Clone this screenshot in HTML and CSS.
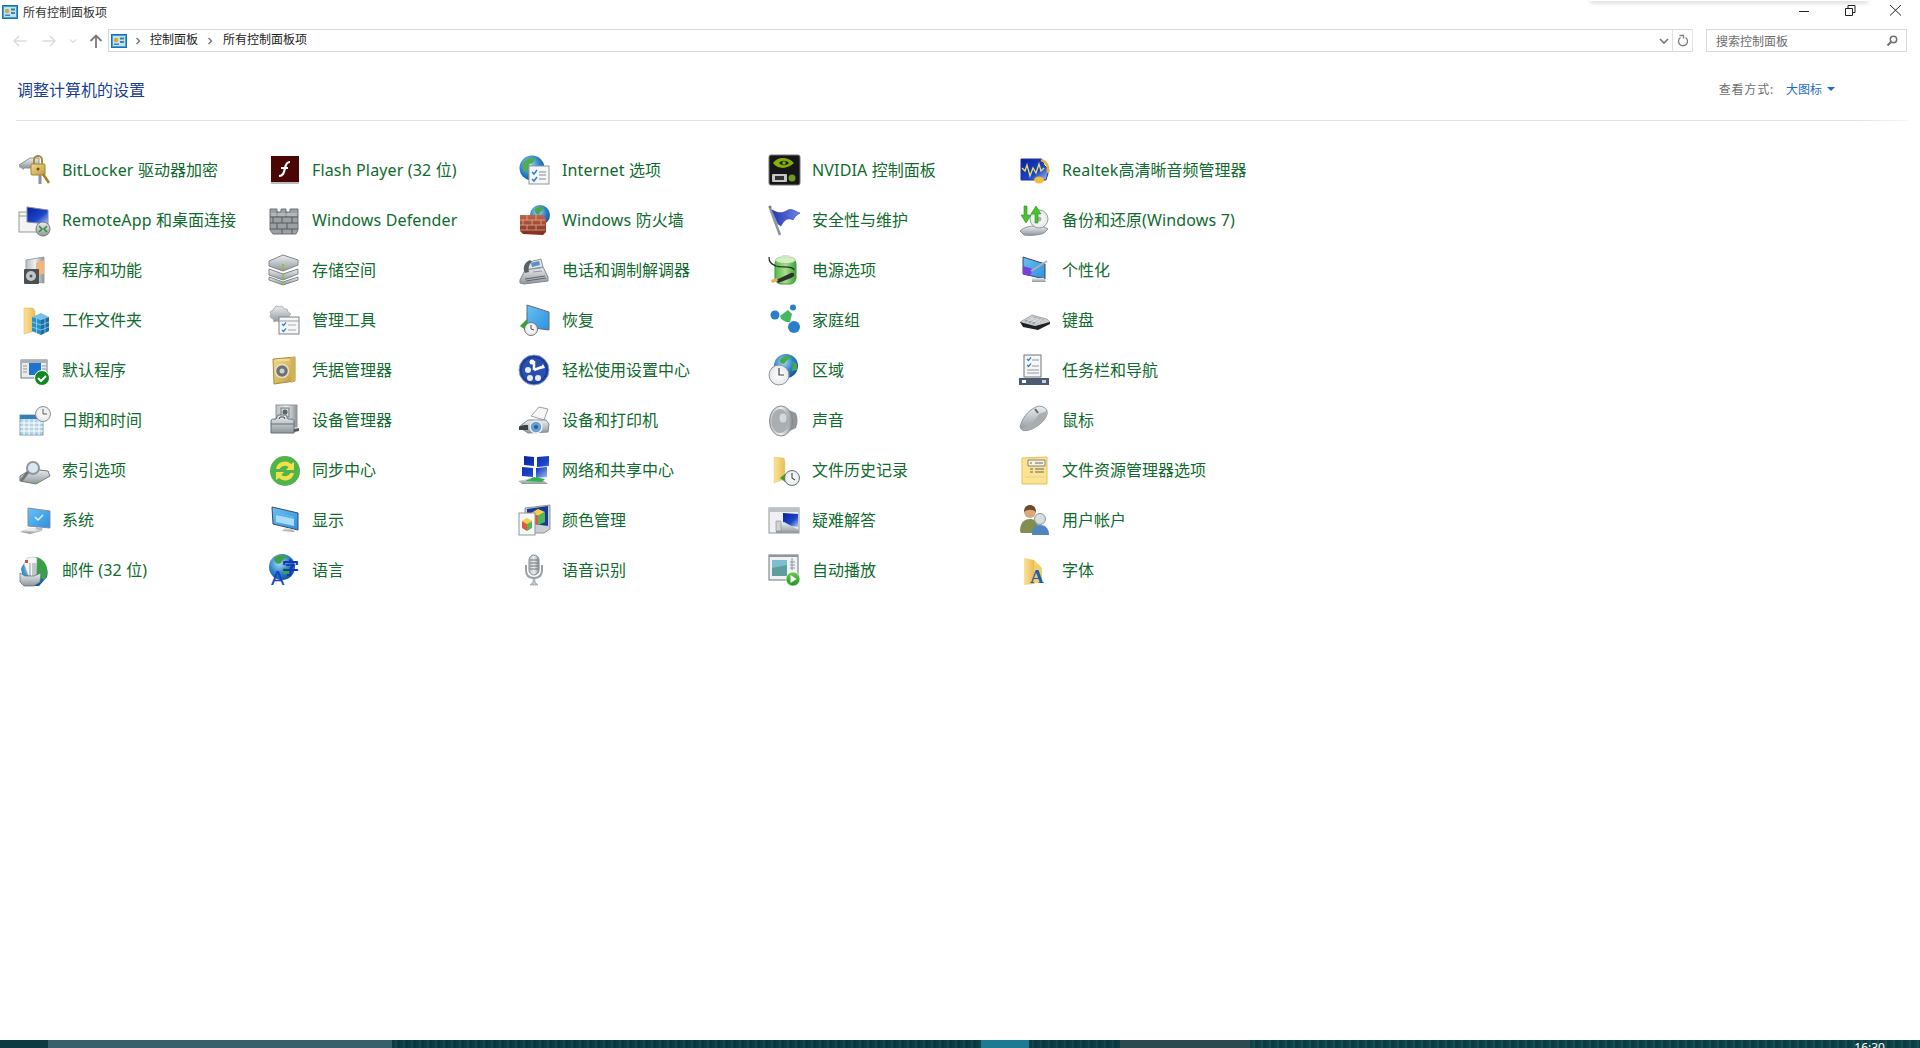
FILE: index.html
```html
<!DOCTYPE html>
<html lang="zh-CN">
<head>
<meta charset="utf-8">
<title>所有控制面板项</title>
<link rel="stylesheet" href="styles.css">
</head>
<body>
<svg class="defs" width="0" height="0" aria-hidden="true">
<defs>
<linearGradient id="steel" x1="0" y1="0" x2="0" y2="1"><stop offset="0" stop-color="#eceff1"/><stop offset="1" stop-color="#8f979c"/></linearGradient>
<linearGradient id="steelH" x1="0" y1="0" x2="1" y2="0"><stop offset="0" stop-color="#b9bfc3"/><stop offset=".5" stop-color="#eef0f1"/><stop offset="1" stop-color="#8a9297"/></linearGradient>
<linearGradient id="gold" x1="0" y1="0" x2="1" y2="1"><stop offset="0" stop-color="#f3dc8e"/><stop offset="1" stop-color="#c09a3e"/></linearGradient>
<linearGradient id="folder" x1="0" y1="0" x2="1" y2="0"><stop offset="0" stop-color="#fbe39a"/><stop offset="1" stop-color="#e8bd55"/></linearGradient>
<linearGradient id="screen" x1="0" y1="0" x2="1" y2="1"><stop offset="0" stop-color="#65c3f5"/><stop offset="1" stop-color="#2f8fdc"/></linearGradient>
<linearGradient id="navy" x1="0" y1="0" x2="1" y2="1"><stop offset="0" stop-color="#0a1f9a"/><stop offset=".6" stop-color="#1b46c9"/><stop offset="1" stop-color="#b9c8ef"/></linearGradient>
<linearGradient id="flag" x1="0" y1="0" x2="1" y2="0"><stop offset="0" stop-color="#2236b4"/><stop offset="1" stop-color="#6f86e6"/></linearGradient>
<linearGradient id="green" x1="0" y1="0" x2="0" y2="1"><stop offset="0" stop-color="#6cc94f"/><stop offset="1" stop-color="#1f9424"/></linearGradient>
<linearGradient id="battery" x1="0" y1="0" x2="1" y2="0"><stop offset="0" stop-color="#54b948"/><stop offset=".5" stop-color="#a6e08a"/><stop offset="1" stop-color="#3aa13a"/></linearGradient>
<radialGradient id="globe" cx=".4" cy=".35" r=".7"><stop offset="0" stop-color="#a9dcf4"/><stop offset=".55" stop-color="#2d86c8"/><stop offset="1" stop-color="#124f97"/></radialGradient>
<radialGradient id="clock" cx=".5" cy=".5" r=".6"><stop offset="0" stop-color="#fff"/><stop offset=".75" stop-color="#e8eaeb"/><stop offset="1" stop-color="#8f979c"/></radialGradient>
<linearGradient id="brick" x1="0" y1="0" x2="0" y2="1"><stop offset="0" stop-color="#c2664a"/><stop offset="1" stop-color="#7c2d20"/></linearGradient>
</defs>
</svg>

<div class="popup-edge"></div>

<header class="titlebar">
  <svg class="cp-icon" viewBox="0 0 16 14"><rect x=".5" y=".5" width="15" height="13" fill="#3f9fdb" stroke="#1e6fae"/><rect x="2" y="2" width="12" height="10" fill="#bfe2f5"/><circle cx="5" cy="6" r="2.2" fill="#d9a63a"/><rect x="9" y="3.5" width="4" height="2" fill="#3b8f52"/><rect x="9" y="7" width="4" height="2" fill="#4e7fb5"/><rect x="3" y="9.5" width="5" height="1.5" fill="#4e7fb5"/></svg>
  <span class="title-text">所有控制面板项</span>
  <div class="window-controls">
    <svg class="win-btn" viewBox="0 0 45 20"><path d="M16 11.500h10" stroke="#222" fill="none"/></svg>
    <svg class="win-btn" viewBox="0 0 45 20"><path d="M17.500 8.500h7v7h-7zM20 8.500v-3h7v7h-2.500" stroke="#222" fill="none"/></svg>
    <svg class="win-btn" viewBox="0 0 45 20"><path d="M17 5l11 10.500M28 5l-11 10.500" stroke="#222" fill="none"/></svg>
  </div>
</header>

<nav class="navbar">
  <div class="nav-buttons">
    <svg class="nav-ico" viewBox="0 0 16 16"><path d="M14.500 8H2M7 3L2 8l5 5" stroke="#dcdcdc" stroke-width="1.500" fill="none"/></svg>
    <svg class="nav-ico" viewBox="0 0 16 16"><path d="M1.500 8H14M9 3l5 5-5 5" stroke="#dcdcdc" stroke-width="1.500" fill="none"/></svg>
    <svg class="nav-small" viewBox="0 0 8 8"><path d="M1 2.500l3 3 3-3" stroke="#dcdcdc" stroke-width="1.200" fill="none"/></svg>
    <svg class="nav-ico" viewBox="0 0 16 16"><path d="M8 15V2.500M2.500 8L8 2.500 13.500 8" stroke="#7a7a7a" stroke-width="1.800" fill="none"/></svg>
  </div>
  <div class="address">
    <svg class="cp-icon" viewBox="0 0 16 14"><rect x=".5" y=".5" width="15" height="13" fill="#3f9fdb" stroke="#1e6fae"/><rect x="2" y="2" width="12" height="10" fill="#bfe2f5"/><circle cx="5" cy="6" r="2.2" fill="#d9a63a"/><rect x="9" y="3.5" width="4" height="2" fill="#3b8f52"/><rect x="9" y="7" width="4" height="2" fill="#4e7fb5"/><rect x="3" y="9.5" width="5" height="1.5" fill="#4e7fb5"/></svg>
    <svg class="crumb-sep" viewBox="0 0 6 8"><path d="M1.500 1l3 3-3 3" stroke="#777" stroke-width="1.400" fill="none"/></svg>
    <span class="crumb">控制面板</span>
    <svg class="crumb-sep" viewBox="0 0 6 8"><path d="M1.500 1l3 3-3 3" stroke="#777" stroke-width="1.400" fill="none"/></svg>
    <span class="crumb crumb-last">所有控制面板项</span>
    <svg class="addr-chevron" viewBox="0 0 10 8"><path d="M1 2l4 4 4-4" stroke="#777" stroke-width="1.600" fill="none"/></svg>
    <div class="refresh"><svg class="refresh-ico" viewBox="0 0 12 14"><path d="M3.500 3.500a4.500 4.500 0 1 0 5 0M2.500 1.500h4v3" stroke="#7f7f7f" stroke-width="1.300" fill="none"/></svg></div>
  </div>
  <div class="search">
    <span class="search-text">搜索控制面板</span>
    <svg class="search-ico" viewBox="0 0 12 12"><circle cx="7.500" cy="4.500" r="3.200" stroke="#6f6f6f" stroke-width="1.500" fill="none"/><path d="M5 7l-3.500 3.500" stroke="#6f6f6f" stroke-width="2" fill="none"/></svg>
  </div>
</nav>

<main class="main">
  <div class="heading-row">
    <h1 class="heading">调整计算机的设置</h1>
    <div class="view-by">
      <span class="view-label">查看方式:</span>
      <span class="view-value">大图标</span>
      <span class="view-caret"></span>
    </div>
  </div>

  <div class="items">
    <!-- row 1 -->
    <a class="item"><svg class="ico" viewBox="0 0 32 32"><path d="M1 11L12 4h9v10H6z" fill="url(#steel)" stroke="#8b9198"/><path d="M1 11l5 3v2l-5-3z" fill="#9aa1a6"/><path d="M16 11V6a4 4 0 0 1 8 0v5" fill="none" stroke="#a98a3c" stroke-width="2"/><rect x="13" y="10" width="14" height="11" rx="1" fill="url(#gold)" stroke="#a5822f"/><circle cx="20" cy="15" r="1.500" fill="#6b5216"/><path d="M22 21v9" stroke="#8b9198" stroke-width="3"/><path d="M25 20l6 9" stroke="#b27b22" stroke-width="2.500"/></svg><span class="label"><span class="latin">BitLocker </span>驱动器加密</span></a>
    <a class="item"><svg class="ico" viewBox="0 0 32 32"><rect x="3" y="2" width="28" height="26" fill="#4a0505"/><path d="M3 28h28v2H3z" fill="#bbb"/><path d="M11 22c4 0 5-3 6-8s3-6 5-6M13 14h7" stroke="#fff" stroke-width="2.200" fill="none"/></svg><span class="label"><span class="latin">Flash Player (32 </span>位<span class="latin">)</span></span></a>
    <a class="item"><svg class="ico" viewBox="0 0 32 32"><circle cx="14" cy="14" r="12.500" fill="url(#globe)"/><path d="M5 9c3-4 8-6 11-5 2 3-2 6-5 6 1 4-2 7-3 9-2-2-4-6-3-10z" fill="#4fae4b"/><path d="M18 12l7 0 0 9-5 3z" fill="#3f9a45"/><rect x="11" y="12" width="20" height="18" fill="#f4f6f7" stroke="#8f979c"/><path d="M14 18l2 2 3-4M14 25l2 2 3-4" stroke="#2b7fd0" stroke-width="1.500" fill="none"/><path d="M21 18h7M21 21h7M21 25h7" stroke="#888" fill="none"/></svg><span class="label"><span class="latin">Internet </span>选项</span></a>
    <a class="item"><svg class="ico" viewBox="0 0 32 32"><rect x="1" y="1" width="31" height="30" rx="2" fill="#161616" stroke="#777"/><path d="M5 9c5-7 15-6 21 0-6 6-16 7-21 0z" fill="#84b000"/><path d="M11 9c3-3 7-3 10 0-3 3-7 3-10 0z" fill="#161616"/><circle cx="16" cy="9" r="1.800" fill="#84b000"/><rect x="4" y="20" width="15" height="8" rx="1" fill="#c6c6c6"/><rect x="7" y="22" width="9" height="4" fill="#333"/><circle cx="24" cy="24" r="3.500" fill="#6f9c1f"/></svg><span class="label"><span class="latin">NVIDIA </span>控制面板</span></a>
    <a class="item"><svg class="ico" viewBox="0 0 32 32"><path d="M3 5h21l2 6 5 5-3 10H3z" fill="url(#navy)" stroke="#23329a"/><path d="M4 14l3 3 2-6 3 11 3-8 3 5 3-9 2 7 3-3" stroke="#f2e15c" stroke-width="1.300" fill="none"/><path d="M23 6c5 1 8 6 7 13" stroke="#e8b338" stroke-width="2.500" fill="none"/><ellipse cx="21" cy="26" rx="5" ry="3.500" fill="#f1be3d"/></svg><span class="label"><span class="latin">Realtek</span>高清晰音频管理器</span></a>

    <!-- row 2 -->
    <a class="item"><svg class="ico" viewBox="0 0 32 32"><rect x="1" y="8" width="22" height="20" fill="#f2f3f4" stroke="#999"/><path d="M1 12h10" stroke="#999"/><path d="M9 3l21 3v14L9 18z" fill="url(#navy)" stroke="#7f8ca8"/><circle cx="25" cy="25" r="7" fill="url(#steel)" stroke="#777"/><path d="M21 22l3 3-3 3M29 22l-3 3 3 3" stroke="#2d8e33" stroke-width="1.500" fill="none"/></svg><span class="label"><span class="latin">RemoteApp </span>和桌面连接</span></a>
    <a class="item"><svg class="ico" viewBox="0 0 32 32"><path d="M2 5h7v3h4V5h5v3h4V5h8v21l-2 4H5l-3-4z" fill="#9aa0a3" stroke="#6d7376"/><path d="M2 13h28M2 19h28M2 25h28M9 8v5M18 8v5M5 13v6M14 13v6M24 13v6M9 19v6M19 19v6M14 25v5M24 25v5" stroke="#555a5d" fill="none"/><path d="M3 9h26v3H3z" fill="#c9cdd0" opacity=".5"/></svg><span class="label"><span class="latin">Windows Defender</span></span></a>
    <a class="item"><svg class="ico" viewBox="0 0 32 32"><circle cx="22" cy="11" r="10" fill="url(#globe)"/><path d="M17 5c3-3 7-3 9-2-1 3-4 4-5 8-2 0-5-3-4-6z" fill="#48a948"/><path d="M2 11l23 0 3 3v14l-3 3-20-1-3-3z" fill="url(#brick)"/><path d="M2 16h25M2 21h25M2 26h25M9 11v5M18 11v5M5 16v5M14 16v5M23 16v5M9 21v5M18 21v5" stroke="#e8b7a2" stroke-width=".7" fill="none"/></svg><span class="label"><span class="latin">Windows </span>防火墙</span></a>
    <a class="item"><svg class="ico" viewBox="0 0 32 32"><path d="M2 4l10 27" stroke="#8f979c" stroke-width="2.500"/><circle cx="2" cy="3" r="1.500" fill="#777"/><path d="M4 6c6 3 10 4 16 0 4-2 8 2 12 3-4 2-6 5-7 7-5-3-9 0-12 6l-3-2z" fill="url(#flag)" stroke="#27369a" stroke-width=".6"/></svg><span class="label">安全性与维护</span></a>
    <a class="item"><svg class="ico" viewBox="0 0 32 32"><path d="M2 27c4-4 10-5 16-5l6 0 6 3-4 4c-4 2-14 3-20 2z" fill="url(#steel)" stroke="#8a9297"/><circle cx="21" cy="15" r="9" fill="url(#clock)" stroke="#9aa1a6"/><circle cx="21" cy="15" r="2.500" fill="#aab0b4"/><path d="M9 2v9h4l-5 8-5-8h3V2z" fill="#46c42e" stroke="#2e8c1f" stroke-width=".6"/><path d="M17 19v-9h-4l5-8 5 8h-3v9z" fill="#46c42e" stroke="#2e8c1f" stroke-width=".6"/></svg><span class="label">备份和还原<span class="latin">(Windows 7)</span></span></a>

    <!-- row 3 -->
    <a class="item"><svg class="ico" viewBox="0 0 32 32"><path d="M8 6l18-3v26l-18-2z" fill="url(#steelH)" stroke="#9aa1a6"/><path d="M18 9l8-3v14l-8 1z" fill="#f0b778"/><rect x="6" y="15" width="15" height="15" fill="#4b4f52" rx="1"/><circle cx="13" cy="22" r="5" fill="#c2c6c9"/><circle cx="13" cy="22" r="1.500" fill="#555"/></svg><span class="label">程序和功能</span></a>
    <a class="item"><svg class="ico" viewBox="0 0 32 32"><path d="M1 7l14-6 15 5v5l-15 6-14-5z" fill="url(#steel)" stroke="#7f878c"/><path d="M1 15l14 5 15-5v5l-15 6-14-5z" fill="url(#steel)" stroke="#7f878c"/><path d="M1 23l14 5 15-5v3l-15 5-14-5z" fill="url(#steel)" stroke="#7f878c"/><path d="M15 10v6M15 19v6M15 28v3" stroke="#8cbf3c" stroke-width="1.500"/></svg><span class="label">存储空间</span></a>
    <a class="item"><svg class="ico" viewBox="0 0 32 32"><path d="M2 26L7 16l18-3 5 10v4L6 30l-4-1z" fill="url(#steel)" stroke="#7f878c"/><path d="M6 16L11 8l12-3 2 8z" fill="#dfe3e6" stroke="#8f979c"/><path d="M13 9l8-2 1 4-8 2z" fill="#5d90c8"/><path d="M7 19C4 13 7 8 12 6l2 2c-3 2-4 6-3 10z" fill="#596066"/><path d="M7 25l20-3M8 27l20-3" stroke="#5e666b" fill="none"/><path d="M15 15l8-1M15 18l9-1" stroke="#8f979c" fill="none"/></svg><span class="label">电话和调制解调器</span></a>
    <a class="item"><svg class="ico" viewBox="0 0 32 32"><rect x="7" y="4" width="21" height="26" rx="6" fill="url(#battery)" stroke="#3f9a3f"/><ellipse cx="17.500" cy="6" rx="10" ry="3.500" fill="#d3efc2" stroke="#7cb96a" stroke-width=".5"/><rect x="14" y="1" width="7" height="3" rx="1" fill="#cfe6c3"/><path d="M1 3c0 6 3 7 7 9 5 2 17-1 18 4" stroke="#2d2d2d" stroke-width="1.300" fill="none"/><path d="M8 26l15-7c2-1 4 1 3 3-1 1-2 1-3 2L10 29z" fill="#2f2f2f"/><path d="M3 26l6-2 1 3-6 2z" fill="#e6b04c"/></svg><span class="label">电源选项</span></a>
    <a class="item"><svg class="ico" viewBox="0 0 32 32"><path d="M5 3l22 7v15l-22-5z" fill="url(#screen)" stroke="#445"/><path d="M5 12l10 3-3 7-7-2z" fill="#7a3fe0"/><path d="M13 17l16-10" stroke="#a9b2b8" stroke-width="2"/><path d="M14 24h12l2 4H14z" fill="url(#steel)"/></svg><span class="label">个性化</span></a>

    <!-- row 4 -->
    <a class="item"><svg class="ico" viewBox="0 0 32 32"><path d="M6 4h9l2 3v20l-11 3z" fill="url(#folder)" stroke="#d9b45a" stroke-width=".5"/><path d="M14 13l9-4 8 4-8 3z" fill="#74c2e8"/><path d="M14 13l9 3v15l-9-4z" fill="#2a8fc7"/><path d="M23 16l8-3v14l-8 4z" fill="#1a6da7"/><path d="M14 18l9 3 8-3M14 23l9 3 8-3M18.500 14.500v14.500M27 15v14" stroke="#a8dcf3" stroke-width=".7" fill="none"/></svg><span class="label">工作文件夹</span></a>
    <a class="item"><svg class="ico" viewBox="0 0 32 32"><path d="M8 2l4 1 2-1 2 3 3 0 1 3 3 2-2 2 0 3H14l-3 3-2-1-3 1-1-3-3-2 1-3-1-2 3-2z" fill="url(#steel)" stroke="#aeb4b7"/><rect x="11" y="13" width="20" height="17" fill="#f4f6f7" stroke="#7c8488"/><path d="M11 17h20" stroke="#9aa1a6"/><path d="M14 20l1.500 1.500 2.500-3M14 26l1.500 1.500 2.500-3" stroke="#3d80c0" stroke-width="1.200" fill="none"/><path d="M20 21h8M20 26h8" stroke="#aaa"/></svg><span class="label">管理工具</span></a>
    <a class="item"><svg class="ico" viewBox="0 0 32 32"><path d="M9 1l22 7v18l-22-3z" fill="url(#screen)" stroke="#667"/><path d="M2 22l7-7v4c4 0 6 2 6 4H9v4z" fill="#35a42f"/><circle cx="13" cy="25" r="6.500" fill="url(#clock)" stroke="#777"/><path d="M13 21v4l3 1" stroke="#444" fill="none"/></svg><span class="label">恢复</span></a>
    <a class="item"><svg class="ico" viewBox="0 0 32 32"><circle cx="7" cy="11" r="4.500" fill="#2a80c8"/><circle cx="25" cy="3.500" r="3" fill="#2a80c8"/><circle cx="26" cy="23" r="6" fill="#2a80c8"/><path d="M12 12l8-6 4 4-2 8-4 0-5-3z" fill="#42b865"/></svg><span class="label">家庭组</span></a>
    <a class="item"><svg class="ico" viewBox="0 0 32 32"><path d="M2 18l12-7 15 4 3 3-12 6-15-3z" fill="#c9cdd0" stroke="#888" stroke-width=".6"/><path d="M6 17l9-4.500 11 3-9 5z" fill="#9ba1a5"/><path d="M9 15.500l11 3M11 14.500l11 3M13 13.500l11 3M9 18l7-5M13 19l7-5M17 20l7-5" stroke="#f4f5f6" stroke-width=".7" fill="none"/><path d="M2 18l15 4 15-4v2l-12 6-15-3z" fill="#222"/></svg><span class="label">键盘</span></a>

    <!-- row 5 -->
    <a class="item"><svg class="ico" viewBox="0 0 32 32"><rect x="3" y="6" width="26" height="18" fill="#e9ebec" stroke="#747b80"/><path d="M3 6h26v3H3z" fill="#aab0b4"/><rect x="11" y="9" width="12" height="12" fill="#1f73cf"/><path d="M5 12h4M5 15h4M5 18h4M24 12h4M24 15h4" stroke="#8f979c"/><circle cx="24" cy="24" r="7.500" fill="#108a1f" stroke="#fff"/><path d="M20 24l3 3 5-5" stroke="#fff" stroke-width="2" fill="none"/></svg><span class="label">默认程序</span></a>
    <a class="item"><svg class="ico" viewBox="0 0 32 32"><path d="M5 5l22-2v24L6 30z" fill="url(#gold)" stroke="#a98a3c"/><path d="M23 3l4 0v24l-4 2z" fill="#d6ae54"/><circle cx="14" cy="17" r="6.500" fill="#6f7072" stroke="#e5e1c9" stroke-width="1.500"/><circle cx="14" cy="17" r="2.500" fill="#cfcfcf"/><path d="M9 6h12" stroke="#f9edbc"/></svg><span class="label">凭据管理器</span></a>
    <a class="item"><svg class="ico" viewBox="0 0 32 32"><circle cx="16" cy="16" r="15" fill="#1b3f96" stroke="#8d9ec6"/><circle cx="16" cy="16" r="12" fill="#2b4fb0"/><circle cx="10" cy="16" r="3" fill="#e8eef8"/><circle cx="12" cy="24" r="3" fill="#e8eef8"/><circle cx="20" cy="24" r="3" fill="#e8eef8"/><circle cx="14" cy="8" r="2.500" fill="#fff"/><path d="M16 16V7M16 16l8-3" stroke="#fff" stroke-width="2.500" fill="none"/><path d="M25 10l2 4-5 1z" fill="#fff"/></svg><span class="label">轻松使用设置中心</span></a>
    <a class="item"><svg class="ico" viewBox="0 0 32 32"><circle cx="18" cy="12" r="12" fill="url(#globe)"/><path d="M12 6c3-4 8-5 11-4-1 3-5 4-6 7-2 2-6 0-5-3zM25 7l4 3 0 6-5 1z" fill="#48a948"/><circle cx="11" cy="21" r="10" fill="url(#clock)" stroke="#8f979c"/><path d="M11 14v7h5" stroke="#444" stroke-width="1.200" fill="none"/></svg><span class="label">区域</span></a>
    <a class="item"><svg class="ico" viewBox="0 0 32 32"><rect x="6" y="1" width="17" height="22" fill="#f6f7f8" stroke="#70777b"/><path d="M9 5l1.500 1.500L13 3.500M9 11l1.500 1.500L13 9.500" stroke="#3d7fc0" stroke-width="1.200" fill="none"/><path d="M14 6h7M14 12h7M9 16h12M9 19h12" stroke="#8f979c" fill="none"/><rect x="1" y="24" width="30" height="7" fill="#4c5a73"/><rect x="4" y="26" width="4" height="3" fill="#fff"/><rect x="24" y="26" width="4" height="3" fill="#c8d0dd"/></svg><span class="label">任务栏和导航</span></a>

    <!-- row 6 -->
    <a class="item"><svg class="ico" viewBox="0 0 32 32"><rect x="2" y="11" width="23" height="20" fill="#b4d4e6" stroke="#7f9fb3"/><path d="M2 11h23v4H2z" fill="#2f80bd"/><path d="M6 15v16M11 15v16M16 15v16M21 15v16M2 19h23M2 23h23M2 27h23" stroke="#fff" fill="none"/><circle cx="25" cy="10" r="7.500" fill="url(#clock)" stroke="#8f979c"/><path d="M25 5v5h4" stroke="#555" fill="none"/></svg><span class="label">日期和时间</span></a>
    <a class="item"><svg class="ico" viewBox="0 0 32 32"><rect x="8" y="1" width="21" height="22" fill="url(#steelH)" stroke="#8f979c"/><rect x="13" y="4" width="8" height="9" fill="#d3d7d9" stroke="#777"/><circle cx="17" cy="8" r="2.500" fill="#5c6366"/><path d="M3 17c0-2 2-2 5-2l2-4h8l2 4c3 0 6 0 6 2v12H3z" fill="url(#steel)" stroke="#5f7180"/><path d="M3 20h23" stroke="#5f7180"/><path d="M11 15l1-2h4l1 2" stroke="#444" fill="none"/><path d="M26 25l5-1v3l-5 1z" fill="#555"/></svg><span class="label">设备管理器</span></a>
    <a class="item"><svg class="ico" viewBox="0 0 32 32"><path d="M13 12L21 3l9 2-4 11z" fill="#f4f6f7" stroke="#9aa1a6"/><path d="M1 23l9-7 18 0 3 4-1 8-20 1z" fill="url(#steel)" stroke="#80878b"/><path d="M1 23c3-2 5-2 9-2l0 5-9 0z" fill="#3c4144"/><circle cx="18" cy="23" r="6" fill="#6aa0cf" stroke="#e6eef5" stroke-width="1.500"/><circle cx="18" cy="23" r="2" fill="#265d92"/></svg><span class="label">设备和打印机</span></a>
    <a class="item"><svg class="ico" viewBox="0 0 32 32"><path d="M13 3l15 6q3 8 0 15l-15 7z" fill="#8f979c"/><ellipse cx="13" cy="17" rx="11.500" ry="15" fill="url(#steelH)" stroke="#888"/><ellipse cx="12" cy="17" rx="8.500" ry="12" fill="#a8aeb2"/><ellipse cx="15" cy="14" rx="3.500" ry="4.500" fill="#d6d9db"/></svg><span class="label">声音</span></a>
    <a class="item"><svg class="ico" viewBox="0 0 32 32"><path d="M2 23C4 15 9 7 18 3c4-2 10 0 11 4s-2 9-7 13c-6 5-14 8-18 6z" fill="url(#steel)" stroke="#8f979c"/><path d="M3 25c7-2 14-8 18-15 3-1 6-2 8-3 0 4-3 9-7 13-6 5-14 8-19 5z" fill="#a8adb0"/><path d="M17 5l3 4" stroke="#5f6568" stroke-width="2"/></svg><span class="label">鼠标</span></a>

    <!-- row 7 -->
    <a class="item"><svg class="ico" viewBox="0 0 32 32"><path d="M2 22l12-7 16 2 2 5-14 8-16-3z" fill="url(#steel)" stroke="#72797d"/><circle cx="15" cy="14" r="6" fill="#d7e8f3" stroke="#8f979c" stroke-width="2"/><path d="M10 18l-7 9" stroke="#777" stroke-width="3"/><circle cx="20" cy="27" r="1" fill="#8ac045"/></svg><span class="label">索引选项</span></a>
    <a class="item"><svg class="ico" viewBox="0 0 32 32"><circle cx="17" cy="17" r="15" fill="#4fb449"/><path d="M8 15a9 9 0 0 1 15-5l3-2v8h-8l2.500-3a6 6 0 0 0-9 2z" fill="#f2e04a"/><path d="M26 19a9 9 0 0 1-15 5l-3 2v-8h8l-2.500 3a6 6 0 0 0 9-2z" fill="#f2e04a"/></svg><span class="label">同步中心</span></a>
    <a class="item"><svg class="ico" viewBox="0 0 32 32"><g fill="url(#navy)"><path d="M6 2l10 1v9l-10-1zM19 3l12-1v10l-12 1zM4 13l11 1v9l-11-1zM18 14l11-1v10l-11 1z"/></g><path d="M0 27l14-3 12 3 4 3H4z" fill="url(#steel)"/><path d="M7 27l9-4 11 2-3 3z" fill="#2fb24a"/></svg><span class="label">网络和共享中心</span></a>
    <a class="item"><svg class="ico" viewBox="0 0 32 32"><path d="M6 3l10 1 1 4v17l-11 4z" fill="url(#folder)" stroke="#e2c26a" stroke-width=".4"/><path d="M12 24l5-4v2h3v4h-3v2z" fill="#35a42f"/><circle cx="24" cy="24" r="7.500" fill="url(#clock)" stroke="#6d7376"/><path d="M24 19v5l3 2" stroke="#444" stroke-width="1.100" fill="none"/></svg><span class="label">文件历史记录</span></a>
    <a class="item"><svg class="ico" viewBox="0 0 32 32"><path d="M4 4l25-1v27H4z" fill="#fce293" stroke="#e5bf58"/><path d="M10 6h17v6H10z" fill="#f9f4d8" stroke="#7c8488"/><path d="M12 9h2M17 9h8M12 15h3M17 15h9M12 18h3M17 18h9" stroke="#666" fill="none"/><path d="M7 23h20" stroke="#e9d184"/></svg><span class="label">文件资源管理器选项</span></a>

    <!-- row 8 -->
    <a class="item"><svg class="ico" viewBox="0 0 32 32"><path d="M10 4l22 3v17l-22-2z" fill="url(#screen)" stroke="#88a"/><path d="M17 13l3 3 5-5" stroke="#dff2fd" stroke-width="1.500" fill="none"/><path d="M2 28l8-4h15l-1 3-12 3z" fill="url(#steel)"/><path d="M18 23v3h6v-2z" fill="#b5bbbf"/><path d="M6 26l12 1M8 25l12 1" stroke="#fff" stroke-width=".6" fill="none"/></svg><span class="label">系统</span></a>
    <a class="item"><svg class="ico" viewBox="0 0 32 32"><path d="M4 3l26 6v17L5 20z" fill="url(#screen)" stroke="#3a4a63"/><path d="M8 9l18 4v9L8 18z" fill="#a8dcfa"/><path d="M8 9l18 4v2L8 11z" fill="#5faee6"/><path d="M17 24l7 1 3 3-13-1z" fill="url(#steel)"/></svg><span class="label">显示</span></a>
    <a class="item"><svg class="ico" viewBox="0 0 32 32"><path d="M7 4l25-3v24l-6 4H11l2-5L7 20z" fill="#c9ced1" stroke="#8f979c"/><path d="M9 5l21-3v20L9 19z" fill="#173a98"/><path d="M13 9l7-4 7 3-7 4z" fill="#f2d23f"/><path d="M13 9l7 3v9l-7-3z" fill="#e4573d"/><path d="M27 8l-7 4v9l7-3z" fill="#4fb85a"/><rect x="1" y="9" width="16" height="22" fill="#f6f7f8" stroke="#8f979c"/><path d="M4 17l5-3 5 3-5 3z" fill="#f2d23f"/><path d="M4 17l5 3v7l-5-3z" fill="#e4573d"/><path d="M14 17l-5 3v7l5-3z" fill="#4fb85a"/></svg><span class="label">颜色管理</span></a>
    <a class="item"><svg class="ico" viewBox="0 0 32 32"><rect x="1" y="4" width="30" height="25" fill="#eef0f1" stroke="#8f979c"/><rect x="1" y="4" width="30" height="4" fill="#bcc2c6"/><path d="M15 9l15 1v13l-15-2z" fill="url(#navy)"/><path d="M8 29l0-8 8-3 15 8v3z" fill="url(#steel)"/><path d="M8 17h5v10H8z" fill="#cfd3d6" stroke="#777" stroke-width=".5"/></svg><span class="label">疑难解答</span></a>
    <a class="item"><svg class="ico" viewBox="0 0 32 32"><circle cx="12" cy="8" r="6" fill="#d9a77e"/><path d="M6 8c0-5 3-7 6-7s6 2 6 7c-3-3-9-3-12 0z" fill="#6c4a2e"/><path d="M2 27c0-8 4-12 10-12 4 0 7 2 8 6l-4 8H3z" fill="#7f8f4f"/><circle cx="22" cy="15" r="5.500" fill="#d8dde0" stroke="#8f979c"/><path d="M14 31c0-7 3-10 8-10s9 3 9 10z" fill="#4f86c0"/></svg><span class="label">用户帐户</span></a>

    <!-- row 9 -->
    <a class="item"><svg class="ico" viewBox="0 0 32 32"><path d="M3 15a13.500 13.500 0 1 1 26 8L21 32H7z" fill="url(#globe)"/><path d="M18 3c5 1 10 5 11 11 1 6-1 10-3 12-3-2-7-3-8-5-3-5-4-15 0-18z" fill="#3aa048"/><path d="M6 10l3-6 5-1 5 1-1 22-8-5z" fill="#f5f6f7" stroke="#a9b0b4" stroke-width=".5"/><path d="M12 9v13M15 9v14M17 9v14" stroke="#8f979c" fill="none"/><rect x="7" y="6" width="3" height="3" fill="#d94848"/><path d="M2 19l5 3h9l7-3-1 9-6 4H6l-4-4z" fill="url(#steel)" stroke="#5b6a7a" stroke-width=".7"/></svg><span class="label">邮件<span class="latin"> (32 </span>位<span class="latin">)</span></span></a>
    <a class="item"><svg class="ico" viewBox="0 0 32 32"><circle cx="14" cy="13" r="13" fill="url(#globe)"/><path d="M6 4c4-3 9-4 13-2-1 3-5 3-6 7-2 2-7 0-7-5zM15 14l7 0-1 8-6-3z" fill="#3f9f4a"/><text class="ico-lang-a" x="3" y="31">A</text><text class="ico-lang-z" x="14" y="20">字</text></svg><span class="label">语言</span></a>
    <a class="item"><svg class="ico" viewBox="0 0 32 32"><rect x="11" y="1" width="10" height="20" rx="5" fill="url(#steelH)" stroke="#7f878c"/><path d="M12 6h8M12 9h8M12 12h8M12 15h8" stroke="#6d7376" fill="none"/><path d="M8 11v5c0 6 4 8 8 8s8-2 8-8v-5" stroke="#9aa1a6" stroke-width="2" fill="none"/><path d="M15 24h2v4l3 3h-8l3-3z" fill="#c0c5c8" stroke="#80878b" stroke-width=".5"/></svg><span class="label">语音识别</span></a>
    <a class="item"><svg class="ico" viewBox="0 0 32 32"><rect x="1" y="1" width="29" height="25" fill="#f0f1f2" stroke="#70777b"/><path d="M1 1h29v2H1z" fill="#8f979c"/><rect x="4" y="6" width="15" height="16" fill="#5d9e9c"/><path d="M4 6h15v5L4 14z" fill="#7cbfd0"/><path d="M22 8h5M22 11h5M22 14h5M24 4v12" stroke="#8f979c" fill="none"/><circle cx="25" cy="25" r="7" fill="url(#green)" stroke="#fff" stroke-width=".6"/><path d="M22.500 21l6 4-6 4z" fill="#fff"/></svg><span class="label">自动播放</span></a>
    <a class="item"><svg class="ico" viewBox="0 0 32 32"><path d="M6 4l10 2v24l-10 1z" fill="url(#folder)"/><path d="M16 6l8 8v12l-8 4z" fill="#f3ce6c"/><text class="ico-font-a" x="12" y="29">A</text></svg><span class="label">字体</span></a>
  </div>
</main>

<footer class="taskbar">
  <div class="tb-seg tb-start"></div>
  <div class="tb-seg tb-search"></div>
  <div class="tb-seg tb-apps"></div>
  <div class="tb-seg tb-active"></div>
  <div class="tb-seg tb-gap"></div>
  <div class="tb-seg tb-dim"></div>
  <div class="tb-seg tb-tray"><span class="tb-clock">16:30</span></div>
</footer>
</body>
</html>
```
FILE: styles.css
```css
* { box-sizing: border-box; }
html, body { margin: 0; padding: 0; }
body {
  width: 1920px;
  height: 1048px;
  overflow: hidden;
  background: #fff;
  display: flex;
  flex-direction: column;
  font-family: "Noto Sans", "Noto Sans CJK SC", sans-serif;
  color: #222;
}
.defs { display: block; width: 0; height: 0; }

.popup-edge {
  position: absolute;
  left: 1590px;
  top: 0;
  width: 278px;
  height: 1px;
  background: #fff;
  box-shadow: 0 1px 4px rgba(0, 0, 0, .55);
}

.titlebar {
  height: 24px;
  flex: none;
  display: flex;
  align-items: center;
  padding-left: 2px;
}
.cp-icon { width: 16px; height: 14px; flex: none; }
.title-text { margin-left: 5px; font-size: 12px; color: #333; }
.window-controls { margin-left: auto; display: flex; margin-right: 2px; align-self: flex-start; }
.win-btn { width: 45px; height: 20px; }

.navbar {
  height: 23px;
  margin-top: 5px;
  flex: none;
  display: flex;
  align-items: stretch;
  padding-right: 13px;
}
.nav-buttons {
  width: 108px;
  display: flex;
  align-items: center;
  padding-left: 12px;
}
.nav-ico { width: 16px; height: 16px; flex: none; }
.nav-ico:nth-child(2) { margin-left: 13px; }
.nav-small { width: 8px; height: 8px; margin-left: 12px; flex: none; }
.nav-ico:nth-child(4) { margin-left: 11px; }

.address {
  width: 1586px;
  border: 1px solid #d9d9d9;
  border-right-color: #e4e4e4;
  display: flex;
  align-items: center;
  padding-left: 2px;
}
.crumb-sep { width: 6px; height: 8px; margin-left: 8px; flex: none; }
.crumb { font-size: 12px; line-height: 18px; color: #222; margin-left: 9px; padding-bottom: 1px; }
.crumb + .crumb-sep { margin-left: 9px; }
.crumb-last { margin-left: 10px; }
.addr-chevron { width: 10px; height: 8px; margin-left: auto; margin-right: 3px; flex: none; }
.refresh {
  width: 20px;
  height: 100%;
  border-left: 1px solid #e2e2e2;
  display: flex;
  align-items: center;
  justify-content: center;
}
.refresh-ico { width: 12px; height: 14px; }

.search {
  width: 201px;
  margin-left: 13px;
  border: 1px solid #d9d9d9;
  display: flex;
  align-items: center;
  justify-content: space-between;
  padding: 0 8px 0 9px;
}
.search-text { font-size: 12px; color: #6d6d6d; }
.search-ico { width: 12px; height: 12px; }

.main { flex: 1; min-height: 0; }
.heading-row {
  height: 69px;
  margin: 0 12px 0 16px;
  padding: 26px 73px 0 1px;
  display: flex;
  align-items: flex-start;
  justify-content: space-between;
  background: linear-gradient(90deg, #e2e2e2 0, #e2e2e2 97%, #f6f6f6 100%) bottom / 100% 1px no-repeat;
}
.heading {
  margin: 0;
  font-size: 16px;
  line-height: 24px;
  font-weight: 400;
  color: #1a3f94;
}
.view-by { display: flex; align-items: center; height: 22px; }
.view-label { font-size: 12px; color: #6d6d6d; letter-spacing: .8px; }
.view-value { font-size: 12px; color: #1c6fc0; margin-left: 12px; }
.view-caret {
  margin-left: 5px;
  width: 0;
  height: 0;
  border-left: 4px solid transparent;
  border-right: 4px solid transparent;
  border-top: 4px solid #1c6fc0;
}

.items {
  margin-top: 24px;
  padding-left: 18px;
  display: grid;
  grid-template-columns: repeat(5, 250px);
  grid-auto-rows: 50px;
}
.item {
  display: flex;
  align-items: center;
  gap: 12px;
  color: #0f6b2e;
}
.ico { width: 32px; height: 32px; flex: none; overflow: visible; }
.label { font-size: 16px; line-height: 22px; white-space: pre; }
.latin { letter-spacing: .15px; }

.ico-lang-a { font-family: "Liberation Sans", sans-serif; font-size: 20px; fill: #1a3fc4; }
.ico-lang-z { font-family: "Noto Sans CJK SC", sans-serif; font-size: 17px; font-weight: 700; fill: #1337b8; }
.ico-font-a { font-family: "Liberation Serif", serif; font-size: 19px; font-weight: 700; fill: #1f5fa8; }

.taskbar {
  height: 8px;
  flex: none;
  display: flex;
  overflow: hidden;
  background: #0d3f49;
}
.tb-seg { height: 100%; flex: none; }
.tb-start { width: 48px; background: #0e3a42; }
.tb-search { width: 344px; background: #38606c; }
.tb-apps { width: 589px; background: repeating-linear-gradient(90deg, #0c3c46 0 3px, #10464c 3px 5px, #0b3640 5px 8px); }
.tb-active { width: 48px; background: #1c7a92; }
.tb-gap { width: 91px; background: repeating-linear-gradient(90deg, #0c3c46 0 3px, #10464c 3px 5px, #0b3640 5px 8px); }
.tb-dim { width: 130px; background: #2c4a50; }
.tb-tray {
  flex: 1;
  background: repeating-linear-gradient(90deg, #0f4148 0 3px, #14504f 3px 5px, #0d3b44 5px 8px);
  display: flex;
  justify-content: flex-end;
  padding-right: 35px;
}
.tb-clock { font-size: 12px; line-height: 12px; color: #fff; margin-top: 2px; }
```
